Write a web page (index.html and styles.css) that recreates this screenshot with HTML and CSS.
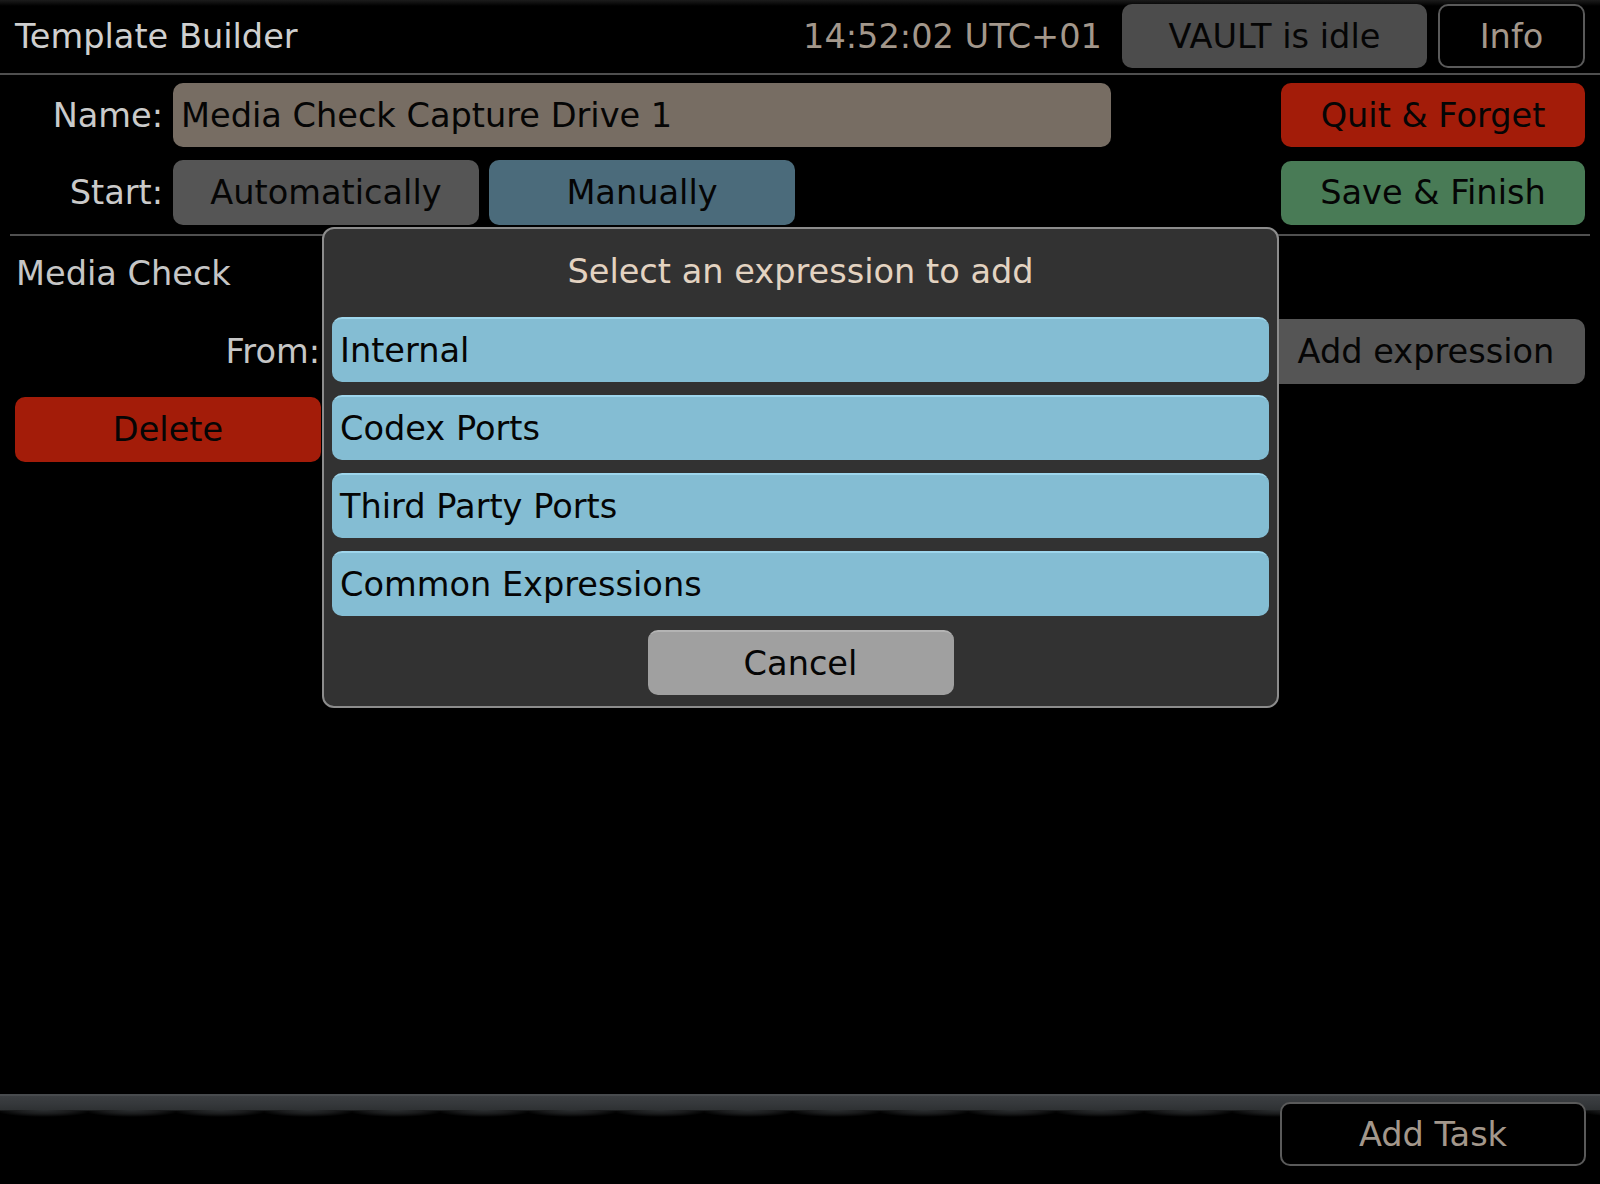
FILE: index.html
```html
<!DOCTYPE html>
<html>
<head>
<meta charset="utf-8">
<link rel="stylesheet" href="styles.css">
</head>
<body>
<div class="app">
  <header class="topbar">
    <div class="title">Template Builder</div>
    <div class="clock">14:52:02 UTC+01</div>
    <div class="btn btn-vault">VAULT is idle</div>
    <div class="btn btn-outline btn-info">Info</div>
  </header>

  <section class="form">
    <div class="row">
      <div class="label">Name:</div>
      <div class="field">Media Check Capture Drive 1</div>
      <div class="spacer"></div>
      <div class="btn btn-red btn-side">Quit &amp; Forget</div>
    </div>
    <div class="row">
      <div class="label">Start:</div>
      <div class="btn btn-grey btn-choice">Automatically</div>
      <div class="btn btn-steel btn-choice">Manually</div>
      <div class="spacer"></div>
      <div class="btn btn-green btn-side">Save &amp; Finish</div>
    </div>
  </section>

  <div class="separator"></div>

  <section class="task">
    <div class="task-title">Media Check</div>
    <div class="row">
      <div class="label label-wide">From:</div>
      <div class="spacer"></div>
      <div class="btn btn-grey btn-add">Add expression</div>
    </div>
    <div class="row">
      <div class="btn btn-red btn-delete">Delete</div>
    </div>
  </section>

  <div class="fill"></div>

  <footer class="bottombar">
    <div class="band"></div>
    <div class="footer-row">
      <div class="btn btn-outline btn-side btn-task">Add Task</div>
    </div>
  </footer>

  <div class="dialog">
    <div class="dialog-title">Select an expression to add</div>
    <div class="options">
      <div class="option">Internal</div>
      <div class="option">Codex Ports</div>
      <div class="option">Third Party Ports</div>
      <div class="option">Common Expressions</div>
    </div>
    <div class="dialog-actions">
      <div class="btn btn-cancel">Cancel</div>
    </div>
  </div>
</div>
</body>
</html>
```

FILE: styles.css
```css
* { box-sizing: border-box; }

html, body {
  margin: 0;
  padding: 0;
  background: #000;
}

body {
  font-family: "DejaVu Sans", "Liberation Sans", sans-serif;
  font-size: 33.6px;
  color: #c9c9c9;
}

.app {
  position: relative;
  width: 1600px;
  height: 1184px;
  display: flex;
  flex-direction: column;
  overflow: hidden;
  background: #000;
}

/* ---------- header ---------- */
.topbar {
  height: 75px;
  display: flex;
  align-items: center;
  padding: 0 15px 1px 15px;
  border-bottom: 2px solid #4f4f4f;
  background: linear-gradient(#1c1c1c 0px, #000 6px);
}

.title {
  flex: 1;
  color: #cfcfcf;
}

.clock {
  color: #a3978b;
  margin-right: 20px;
}

.btn {
  display: flex;
  align-items: center;
  justify-content: center;
  height: 64px;
  border-radius: 10px;
  color: #050505;
  white-space: nowrap;
}

.btn-vault {
  width: 305px;
  background: #4c4c4c;
}

.btn-outline {
  background: #000;
  border: 2px solid #5a5a5a;
  color: #a3978b;
}

.btn-info {
  width: 147px;
  margin-left: 11px;
}

/* ---------- form ---------- */
.form {
  display: flex;
  flex-direction: column;
  gap: 13px;
  padding: 8px 15px 9px 0;
}

.row {
  display: flex;
  align-items: center;
  gap: 10px;
}

.label {
  width: 163px;
  text-align: right;
  color: #cacaca;
}

.field {
  width: 938px;
  height: 64px;
  border-radius: 10px;
  background: #776d63;
  color: #050505;
  display: flex;
  align-items: center;
  padding-left: 8px;
}

.spacer { flex: 1; }

.btn-side { width: 304px; }

.btn-choice { width: 306px; height: 65px; }

.btn-red   { background: #a31c09; }
.btn-green { background: #497b56; }
.btn-grey  { background: #555555; }
.btn-steel { background: #4b6b7b; }

.separator {
  margin: 0 10px;
  border-top: 2px solid #505050;
}

/* ---------- task ---------- */
.task {
  display: flex;
  flex-direction: column;
  padding: 18px 15px 0 15px;
}

.task-title {
  height: 40px;
  line-height: 40px;
  padding-left: 1px;
  color: #c6c6c6;
  margin-bottom: 25px;
}

.task .row + .row { margin-top: 13px; }

.label-wide {
  width: 305px;
  color: #c6c6c6;
}

.btn-add {
  width: 318px;
  height: 65px;
}

.btn-delete {
  width: 306px;
  height: 65px;
}

.fill { flex: 1; }

/* ---------- footer ---------- */
.bottombar {
  position: relative;
  height: 90px;
}

.band {
  height: 24px;
  border-top: 2px solid #484b4e;
  background:
    radial-gradient(ellipse 50px 7px at 44px 0px, #2c2f31 0%, #1a1b1c 55%, rgba(0,0,0,0) 100%) 0 14px / 88px 8px repeat-x,
    linear-gradient(#3c3f42 0px, #35383b 8px, #2e3133 14px, rgba(0,0,0,0) 15px);
}

.footer-row {
  position: absolute;
  top: 8px;
  right: 14px;
}

.btn-task {
  height: 64px;
  width: 306px;
  border-color: #5a5a5a;
}

/* ---------- dialog ---------- */
.dialog {
  position: absolute;
  left: 322px;
  top: 227px;
  width: 957px;
  height: 481px;
  background: #323232;
  border: 2px solid #8c8c8c;
  border-radius: 12px;
  display: flex;
  flex-direction: column;
  padding: 0 8px;
}

.dialog-title {
  height: 88px;
  display: flex;
  align-items: center;
  justify-content: center;
  color: #e3d3c1;
  padding-bottom: 4px;
}

.options {
  display: flex;
  flex-direction: column;
  gap: 13px;
}

.option {
  height: 65px;
  border-radius: 10px;
  background: #84bdd3;
  border-top: 2px solid #9ed6ec;
  color: #050505;
  display: flex;
  align-items: center;
  padding-left: 8px;
}

.dialog-actions {
  display: flex;
  justify-content: center;
  padding-top: 14px;
}

.btn-cancel {
  width: 306px;
  height: 65px;
  background: #a0a0a0;
  border-top: 2px solid #b4b4b4;
}
```
